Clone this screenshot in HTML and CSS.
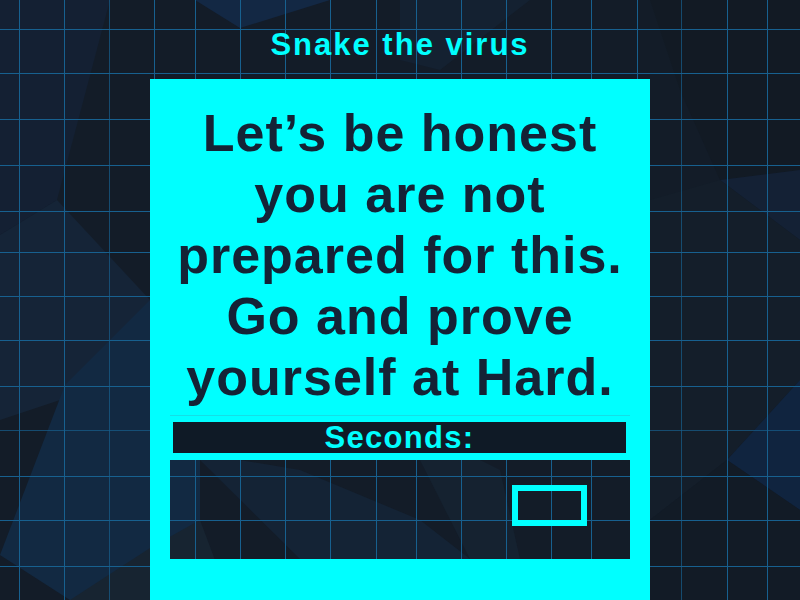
FILE: index.html
```html
<!DOCTYPE html>
<html lang="en">
<head>
<meta charset="utf-8">
<title>Snake the virus</title>
<link rel="stylesheet" href="styles.css">
</head>
<body>
<svg class="bg-layer" width="800" height="600" viewBox="0 0 800 600" aria-hidden="true">
  <defs>
    <symbol id="bg" viewBox="0 0 800 600">
      <rect x="0" y="0" width="800" height="600" fill="#131c28"/>
      <polygon points="0,0 110,0 57,200 0,235" fill="#142033"/>
      <polygon points="0,235 57,200 150,300 120,380 0,420" fill="#152437"/>
      <polygon points="0,555 65,385 150,300 200,360 200,600 70,600" fill="#122942"/>
      <polygon points="70,600 150,548 200,520 230,600" fill="#172431"/>
      <polygon points="195,0 240,28 330,0" fill="#132844"/>
      <polygon points="400,0 530,0 440,70 400,60" fill="#142131"/>
      <polygon points="650,0 800,0 800,170 720,180 680,90" fill="#121a24"/>
      <polygon points="720,180 800,170 800,240" fill="#142135"/>
      <polygon points="650,200 720,180 800,240 800,380 727,460 650,520" fill="#141e2a"/>
      <polygon points="727,460 800,380 800,510" fill="#10243f"/>
      <polygon points="650,520 727,460 800,510 800,600 650,600" fill="#121b26"/>
      <polygon points="200,460 240,460 300,470 420,520 470,559 300,559" fill="#142335"/>
      <polygon points="420,460 480,460 500,470 520,559 470,559" fill="#152230"/>
      <g stroke="#17608f" stroke-width="1">
        <line x1="19.5" y1="0" x2="19.5" y2="600"/>
        <line x1="64.5" y1="0" x2="64.5" y2="600"/>
        <line x1="109.5" y1="0" x2="109.5" y2="600" stroke-opacity="0.7"/>
        <line x1="154.5" y1="0" x2="154.5" y2="600"/>
        <line x1="195.5" y1="0" x2="195.5" y2="600"/>
        <line x1="240.5" y1="0" x2="240.5" y2="600"/>
        <line x1="285.5" y1="0" x2="285.5" y2="600"/>
        <line x1="330.5" y1="0" x2="330.5" y2="600"/>
        <line x1="376.5" y1="0" x2="376.5" y2="600"/>
        <line x1="416.5" y1="0" x2="416.5" y2="600"/>
        <line x1="461.5" y1="0" x2="461.5" y2="600"/>
        <line x1="506.5" y1="0" x2="506.5" y2="600"/>
        <line x1="551.5" y1="0" x2="551.5" y2="600"/>
        <line x1="591.5" y1="0" x2="591.5" y2="600"/>
        <line x1="637.5" y1="0" x2="637.5" y2="600"/>
        <line x1="681.5" y1="0" x2="681.5" y2="600" stroke-opacity="0.7"/>
        <line x1="727.5" y1="0" x2="727.5" y2="600"/>
        <line x1="767.5" y1="0" x2="767.5" y2="600"/>
        <line x1="0" y1="29.5" x2="800" y2="29.5"/>
        <line x1="0" y1="73.5" x2="800" y2="73.5"/>
        <line x1="0" y1="119.5" x2="800" y2="119.5"/>
        <line x1="0" y1="165.5" x2="800" y2="165.5"/>
        <line x1="0" y1="211.5" x2="800" y2="211.5"/>
        <line x1="0" y1="252.5" x2="800" y2="252.5"/>
        <line x1="0" y1="296.5" x2="800" y2="296.5"/>
        <line x1="0" y1="340.5" x2="800" y2="340.5"/>
        <line x1="0" y1="386.5" x2="800" y2="386.5"/>
        <line x1="0" y1="430.5" x2="800" y2="430.5" stroke-opacity="0.7"/>
        <line x1="0" y1="476.5" x2="800" y2="476.5"/>
        <line x1="0" y1="520.5" x2="800" y2="520.5"/>
        <line x1="0" y1="566.5" x2="800" y2="566.5"/>
      </g>
    </symbol>
  </defs>
  <use href="#bg" x="0" y="0" width="800" height="600"/>
</svg>

<header class="header">
  <h1 class="title">Snake the virus</h1>
</header>

<main class="panel">
  <p class="message">Let’s be honest<br>you are not<br>prepared for this.<br>Go and prove<br>yourself at Hard.</p>
  <hr class="divider">
  <div class="seconds">Seconds:</div>
  <div class="game">
    <svg class="game-bg" width="460" height="99" viewBox="170 460 460 99" aria-hidden="true">
      <use href="#bg" x="0" y="0" width="800" height="600"/>
    </svg>
    <div class="food"></div>
  </div>
</main>
</body>
</html>
```

FILE: styles.css
```css
html, body {
  margin: 0;
  padding: 0;
}

body {
  width: 800px;
  height: 600px;
  overflow: hidden;
  position: relative;
  background: #131c28;
  font-family: "Liberation Sans", Arial, sans-serif;
}

.bg-layer {
  position: absolute;
  left: 0;
  top: 0;
  z-index: 0;
  display: block;
}

.header {
  position: relative;
  z-index: 1;
  padding-top: 25px;
  margin-bottom: 14px;
}

.title {
  margin: 0;
  height: 40px;
  font-size: 31px;
  line-height: 40px;
  font-weight: bold;
  letter-spacing: 2px;
  color: #00ffff;
  text-align: center;
}

.panel {
  position: relative;
  z-index: 1;
  box-sizing: border-box;
  width: 500px;
  height: 521px;
  margin: 0 auto;
  padding: 24px 20px 0;
  background: #00ffff;
}

.message {
  margin: 0;
  font-size: 52px;
  line-height: 61px;
  font-weight: bold;
  letter-spacing: 1px;
  color: #142336;
  text-align: center;
  white-space: nowrap;
}

.divider {
  margin: 7px 0 0;
  border: 0;
  height: 1px;
  background: #14dfe6;
}

.seconds {
  margin: 6px 4px 0 3px;
  height: 31px;
  background: #0f1a26;
  color: #00ffff;
  font-size: 31px;
  line-height: 31px;
  font-weight: bold;
  letter-spacing: 1.3px;
  text-align: center;
}

.game {
  position: relative;
  margin-top: 7px;
  width: 460px;
  height: 99px;
  overflow: hidden;
}

.game-bg {
  display: block;
}

.food {
  position: absolute;
  left: 342px;
  top: 25px;
  width: 63px;
  height: 29px;
  border: 6.5px solid #00ffff;
}
```
